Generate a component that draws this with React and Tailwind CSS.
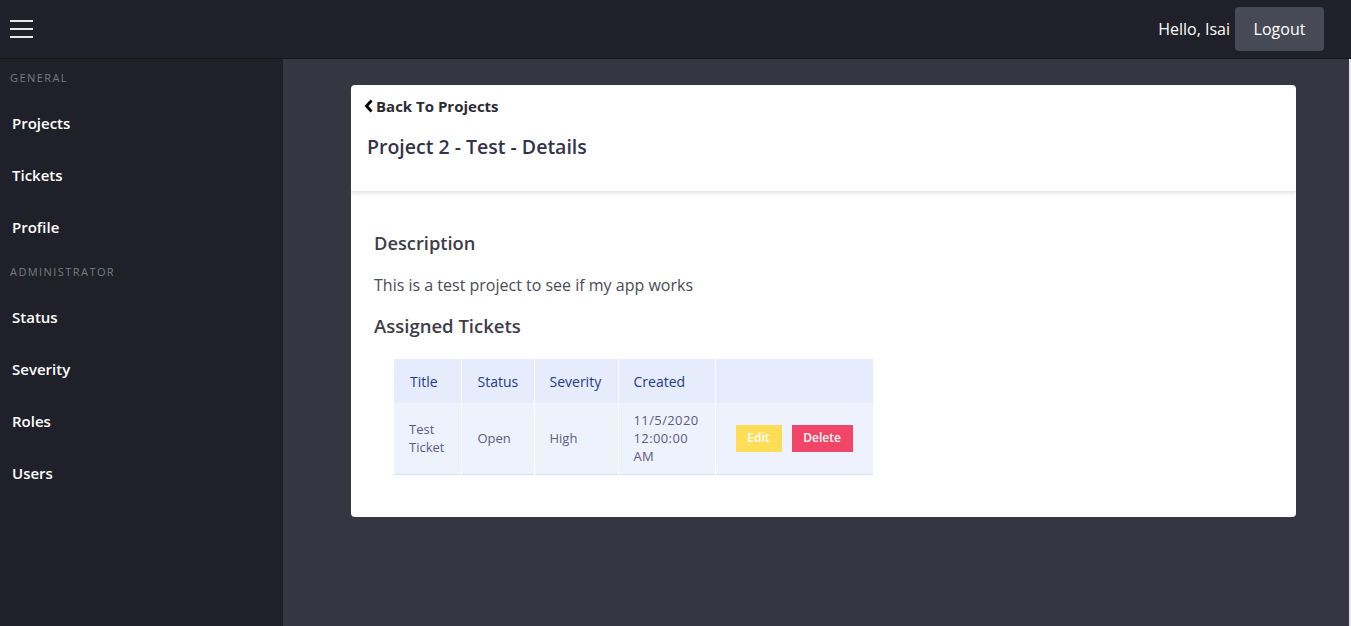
import React from "react";

const font = { fontFamily: "'Open Sans', Lato, sans-serif" };

function NavLabel({ children }) {
  return (
    <div className="px-[10px] my-[12px] h-[14px] leading-[14px] text-[11px] tracking-[0.13em] text-[#7b7b82] uppercase">
      {children}
    </div>
  );
}

function NavItem({ children }) {
  return (
    <div className="h-[52px] flex items-center px-[12px] text-[15px] font-semibold text-white">
      {children}
    </div>
  );
}

export default function App() {
  return (
    <div className="h-screen w-full flex flex-col overflow-hidden" style={font}>
      <header className="h-[59px] shrink-0 bg-[#1f2029] border-b border-[#17171d] flex items-center justify-between pl-[10px] pr-[27px]">
        <div className="flex flex-col gap-[6px] w-[23px]">
          <span className="block h-[2px] bg-[#e6e6e6]" />
          <span className="block h-[2px] bg-[#e6e6e6]" />
          <span className="block h-[2px] bg-[#e6e6e6]" />
        </div>
        <div className="flex items-center gap-[5px]">
          <span className="text-white text-[16px]">Hello, Isai</span>
          <button className="h-[44px] w-[89px] rounded-[4px] bg-[#474955] text-white text-[16px]">
            Logout
          </button>
        </div>
      </header>
      <div className="flex flex-1 min-h-0">
        <aside className="w-[283px] shrink-0 bg-[#1f2029]">
          <NavLabel>General</NavLabel>
          <NavItem>Projects</NavItem>
          <NavItem>Tickets</NavItem>
          <NavItem>Profile</NavItem>
          <NavLabel>Administrator</NavLabel>
          <NavItem>Status</NavItem>
          <NavItem>Severity</NavItem>
          <NavItem>Roles</NavItem>
          <NavItem>Users</NavItem>
        </aside>
        <main className="flex-1 bg-[#353642] border-r-2 border-[#e4e4e6] pt-[26px] pl-[68px]">
          <div className="w-[945px] bg-white rounded-[4px] overflow-hidden">
            <div className="relative z-10 h-[106px] shadow-[0_2px_4px_rgba(0,0,0,0.12)] px-[13px] pt-[11px]">
              <div className="flex items-center gap-[2px] text-[15px] font-bold text-[#2b2b35] h-[20px]">
                <svg width="10" height="14" viewBox="0 0 10 14" className="shrink-0">
                  <polyline points="7.5,1.5 2.5,7 7.5,12.5" fill="none" stroke="#000" strokeWidth="2.8" strokeLinecap="butt" strokeLinejoin="miter" />
                </svg>
                <span>Back To Projects</span>
              </div>
              <h1 className="mt-[19px] ml-[3px] text-[19.5px] font-semibold text-[#33334a] leading-[24px]">
                Project 2 - Test - Details
              </h1>
            </div>
            <div className="px-[23px] pt-[40px] pb-[42px]">
              <h2 className="text-[18.3px] font-semibold text-[#3d3d48] leading-[24px]">Description</h2>
              <p className="mt-[20px] text-[16px] text-[#4a4a55] leading-[20px]">
                This is a test project to see if my app works
              </p>
              <h2 className="mt-[19px] text-[18.5px] font-semibold text-[#3d3d48] leading-[24px]">Assigned Tickets</h2>
              <div className="mt-[21px] ml-[20px]">
                <table className="border-collapse text-left">
                  <thead>
                    <tr className="bg-[#e6ecfb] h-[44px] text-[14px] text-[#1d3b8b]">
                      <th className="font-normal w-[67px] pl-[16px] border-r border-white">Title</th>
                      <th className="font-normal w-[73px] pl-[16px] border-r border-white">Status</th>
                      <th className="font-normal w-[84px] pl-[15px] border-r border-white">Severity</th>
                      <th className="font-normal w-[97px] pl-[15px] border-r border-white">Created</th>
                      <th className="font-normal w-[158px]"></th>
                    </tr>
                  </thead>
                  <tbody>
                    <tr className="bg-[#eef2fd] h-[71px] text-[13px] text-[#5c5a82] leading-[18px] border-b border-[#d6e0fa]">
                      <td className="pl-[15px] border-r border-white">Test<br />Ticket</td>
                      <td className="pl-[16px] border-r border-white">Open</td>
                      <td className="pl-[15px] border-r border-white">High</td>
                      <td className="pl-[15px] border-r border-white tracking-[0.03em]">11/5/2020<br />12:00:00<br />AM</td>
                      <td className="pl-[20px]">
                        <div className="flex gap-[10px]">
                          <button className="h-[27px] w-[46px] bg-[#ffdd57] text-white text-[12px] font-semibold">Edit</button>
                          <button className="h-[27px] w-[61px] bg-[#f14668] text-white text-[12px] font-semibold">Delete</button>
                        </div>
                      </td>
                    </tr>
                  </tbody>
                </table>
              </div>
            </div>
          </div>
        </main>
      </div>
    </div>
  );
}
